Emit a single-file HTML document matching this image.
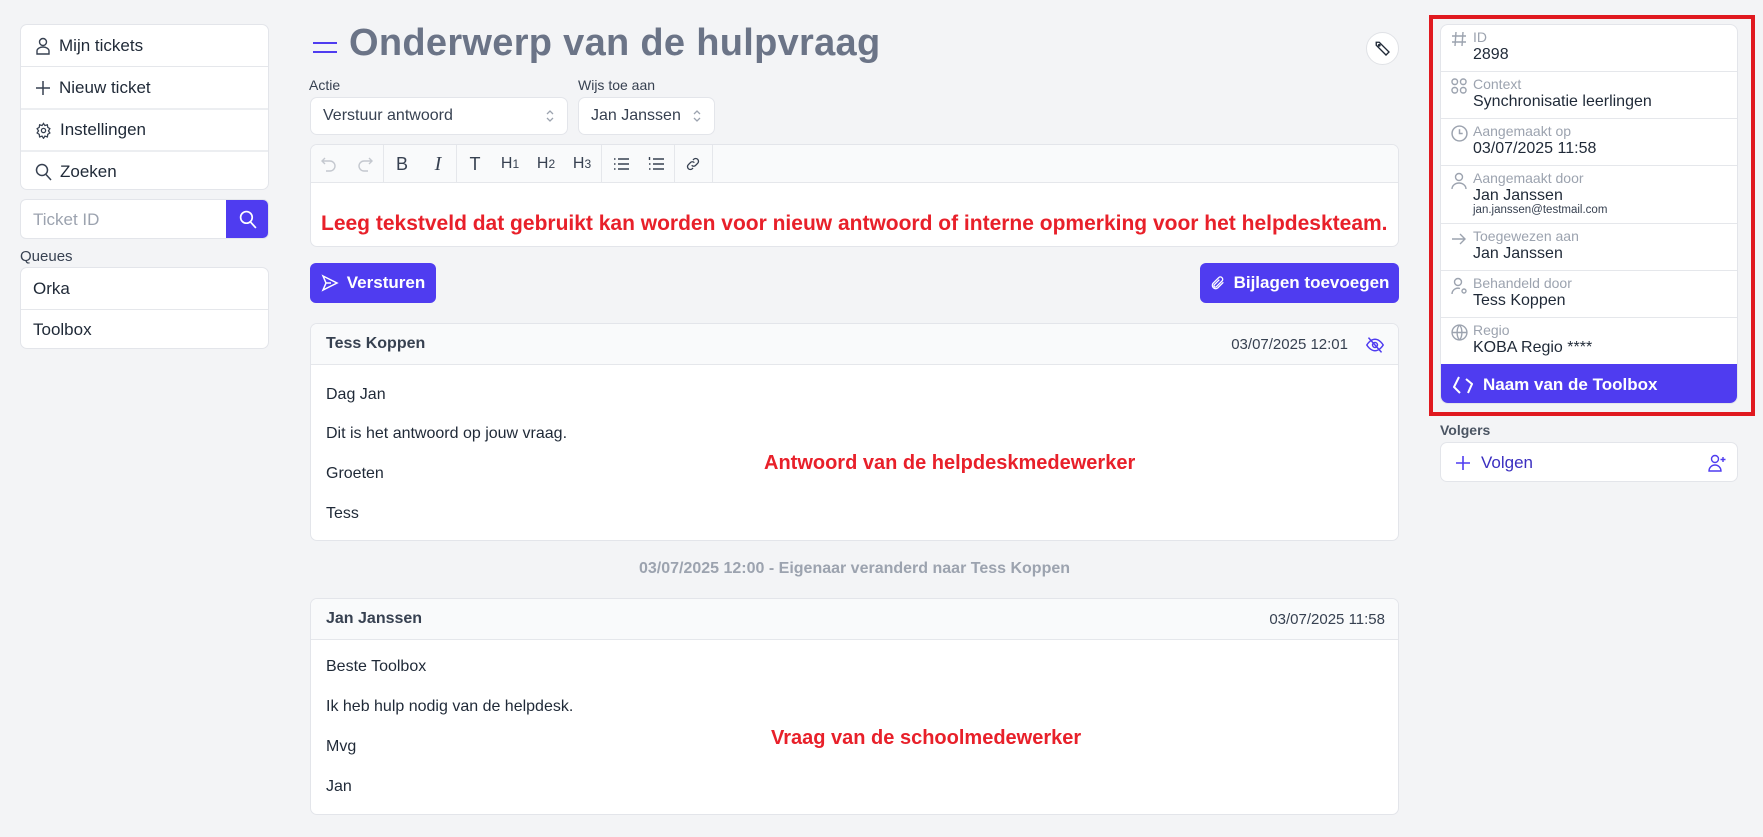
<!DOCTYPE html>
<html><head><meta charset="utf-8"><style>
*{box-sizing:border-box;margin:0;padding:0}
body{width:1763px;height:837px;background:#f3f4f6;font-family:"Liberation Sans",sans-serif;color:#1f2937;position:relative;overflow:hidden}
.a{position:absolute}
.box{position:absolute;background:#fff;border:1px solid #e3e5ea;border-radius:7px;overflow:hidden}
.row{position:absolute;left:0;right:0;border-top:1px solid #e5e7eb;display:flex;align-items:center;padding-left:14px;font-size:17px;color:#1f2937}
.row svg{margin-right:8px}
.lbl{font-size:14px;color:#374151}
.btn{position:absolute;background:#4f3cf0;color:#fff;border-radius:6px;font-weight:bold;font-size:17px;display:flex;align-items:center;justify-content:center;gap:8px}
.tb{position:absolute;top:0;height:38px;display:flex;align-items:center;justify-content:center;font-size:18px;color:#374151;width:36px}
.sep{position:absolute;top:0;width:1px;height:38px;background:#e5e7eb}
.red{position:absolute;color:#e8202a;font-weight:bold;white-space:nowrap}
.msgline{position:absolute;left:15px;font-size:16px;color:#1f2937}
.ir{position:absolute;left:0;right:0;border-top:1px solid #e5e7eb}
.ir .l{position:absolute;left:32px;top:4px;font-size:14px;color:#9ca3af}
.ir .v{position:absolute;left:32px;top:21px;font-size:16px;color:#1f2937}
.ir svg{position:absolute;left:10px;top:6px}
</style></head><body>

<!-- left sidebar -->
<div class="box" style="left:20px;top:24px;width:249px;height:166px">
 <div class="row" style="top:0;height:41px;border-top:none"><svg width="16" height="18" viewBox="0 0 16 18" fill="none" stroke="#374151" stroke-width="1.4"><circle cx="8" cy="5" r="3.5"/><path d="M2 17v-3a6 4 0 0 1 12 0v3z"/></svg>Mijn tickets</div>
 <div class="row" style="top:41px;height:42px"><svg width="16" height="16" viewBox="0 0 16 16" stroke="#374151" stroke-width="1.5"><path d="M8 1v14M1 8h14"/></svg>Nieuw ticket</div>
 <div class="row" style="top:83px;height:42px;border-top:2px solid #eceef1"><svg width="17" height="17" viewBox="0 0 24 24" fill="none" stroke="#374151" stroke-width="1.8"><circle cx="12" cy="12" r="3"/><path d="M12 2l2 3 3.5-1 .5 3.5 3 2-2 3 2 3-3 2-.5 3.5-3.5-1-2 3-2-3-3.5 1-.5-3.5-3-2 2-3-2-3 3-2 .5-3.5 3.5 1z"/></svg>Instellingen</div>
 <div class="row" style="top:125px;height:41px;border-top:2px solid #eceef1"><svg width="17" height="18" viewBox="0 0 17 18" fill="none" stroke="#374151" stroke-width="1.5"><circle cx="7" cy="7" r="5.5"/><path d="M11 11.5l5 5.5"/></svg>Zoeken</div>
</div>
<div class="box" style="left:20px;top:199px;width:249px;height:40px;border-radius:6px">
 <div class="a" style="left:12px;top:10px;font-size:17px;color:#9ca3af">Ticket ID</div>
 <div class="a" style="left:205px;top:-1px;width:44px;height:40px;background:#4f3cf0;display:flex;align-items:center;justify-content:center"><svg width="18" height="19" viewBox="0 0 17 18" fill="none" stroke="#fff" stroke-width="1.6"><circle cx="7" cy="7" r="5.5"/><path d="M11 11.5l5 5.5"/></svg></div>
</div>
<div class="a lbl" style="left:20px;top:248px;font-size:15px">Queues</div>
<div class="box" style="left:20px;top:267px;width:249px;height:82px">
 <div class="row" style="top:0;height:41px;border-top:none;padding-left:12px">Orka</div>
 <div class="row" style="top:41px;height:41px;padding-left:12px">Toolbox</div>
</div>

<!-- title -->
<svg class="a" style="left:313px;top:40px" width="24" height="14" viewBox="0 0 24 14" stroke="#4f3cf0" stroke-width="2"><path d="M0 3h24M0 12h24"/></svg>
<div class="a" style="left:349px;top:22px;font-size:38px;font-weight:bold;color:#6b7487;letter-spacing:.3px">Onderwerp van de hulpvraag</div>
<div class="a" style="left:1366px;top:32px;width:33px;height:33px;border-radius:50%;background:#fff;border:1px solid #e0e2e6;display:flex;align-items:center;justify-content:center"><svg width="18" height="18" viewBox="0 0 24 24" fill="none" stroke="#1f2937" stroke-width="1.8"><path d="M3 7V3h4l13 13-4 4L3 7z"/><circle cx="7" cy="7" r="1"/></svg></div>

<div class="a lbl" style="left:309px;top:77px">Actie</div>
<div class="a lbl" style="left:578px;top:77px">Wijs toe aan</div>
<div class="box" style="left:310px;top:97px;width:258px;height:38px">
 <div class="a" style="left:12px;top:9px;font-size:16px;color:#374151">Verstuur antwoord</div>
 <svg class="a" style="left:234px;top:11px" width="10" height="14" viewBox="0 0 10 14" fill="none" stroke="#9ca3af" stroke-width="1.3"><path d="M2 5l3-3 3 3M2 9l3 3 3-3"/></svg>
</div>
<div class="box" style="left:578px;top:97px;width:137px;height:38px">
 <div class="a" style="left:12px;top:9px;font-size:16px;color:#374151">Jan Janssen</div>
 <svg class="a" style="left:113px;top:11px" width="10" height="14" viewBox="0 0 10 14" fill="none" stroke="#9ca3af" stroke-width="1.3"><path d="M2 5l3-3 3 3M2 9l3 3 3-3"/></svg>
</div>

<!-- editor -->
<div class="box" style="left:310px;top:144px;width:1089px;height:103px">
 <div class="a" style="left:0;top:0;right:0;height:38px;background:#f9fafb;border-bottom:1px solid #e5e7eb"></div>
 <div class="tb" style="left:0"><svg width="16" height="16" viewBox="0 0 16 16" fill="none" stroke="#c4c8cf" stroke-width="1.4"><path d="M4 2L1 5l3 3M1 5h8a5 5 0 0 1 0 10H5"/></svg></div>
 <div class="tb" style="left:36px"><svg width="16" height="16" viewBox="0 0 16 16" fill="none" stroke="#c4c8cf" stroke-width="1.4"><path d="M12 2l3 3-3 3M15 5H7a5 5 0 0 0 0 10h4"/></svg></div>
 <div class="sep" style="left:72px"></div>
 <div class="tb" style="left:73px">B</div>
 <div class="tb" style="left:109px;font-style:italic;font-family:'Liberation Serif',serif;font-size:20px">I</div>
 <div class="sep" style="left:145px"></div>
 <div class="tb" style="left:146px">T</div>
 <div class="tb" style="left:181px;font-size:16px">H<span style="font-size:12px">1</span></div>
 <div class="tb" style="left:217px;font-size:16px">H<span style="font-size:12px">2</span></div>
 <div class="tb" style="left:253px;font-size:16px">H<span style="font-size:12px">3</span></div>
 <div class="sep" style="left:290px"></div>
 <div class="tb" style="left:292px"><svg width="16" height="14" viewBox="0 0 16 14" stroke="#374151" stroke-width="1.4"><path d="M5 2h11M5 7h11M5 12h11M1 2h1.5M1 7h1.5M1 12h1.5"/></svg></div>
 <div class="tb" style="left:327px"><svg width="16" height="14" viewBox="0 0 16 14" stroke="#374151" stroke-width="1.4"><path d="M5 2h11M5 7h11M5 12h11M1.5 0v3M1 7h1.5M1 12h1.5"/></svg></div>
 <div class="sep" style="left:363px"></div>
 <div class="tb" style="left:364px"><svg width="16" height="16" viewBox="0 0 24 24" fill="none" stroke="#374151" stroke-width="2"><path d="M10 14a4 4 0 0 0 6 0l3-3a4 4 0 0 0-6-6l-1 1M14 10a4 4 0 0 0-6 0l-3 3a4 4 0 0 0 6 6l1-1"/></svg></div>
 <div class="sep" style="left:401px"></div>
 <div class="red" style="left:10px;top:67px;font-size:21px">Leeg tekstveld dat gebruikt kan worden voor nieuw antwoord of interne opmerking voor het helpdeskteam.</div>
</div>

<div class="btn" style="left:310px;top:263px;width:126px;height:40px"><svg width="18" height="18" viewBox="0 0 18 18" fill="none" stroke="#fff" stroke-width="1.5"><path d="M2 2l14 7-14 7 3-7z M5 9h5"/></svg>Versturen</div>
<div class="btn" style="left:1200px;top:263px;width:199px;height:40px"><svg width="16" height="18" viewBox="0 0 24 24" fill="none" stroke="#fff" stroke-width="2"><path d="M20 11l-8.5 8.5a5 5 0 0 1-7-7L13 4a3.5 3.5 0 0 1 5 5l-8.5 8.5a2 2 0 0 1-3-3L14 7"/></svg>Bijlagen toevoegen</div>

<!-- message 1 -->
<div class="box" style="left:310px;top:323px;width:1089px;height:218px">
 <div class="a" style="left:0;top:0;right:0;height:41px;background:#f9fafb;border-bottom:1px solid #e5e7eb"></div>
 <div class="a" style="left:15px;top:11px;font-size:16px;font-weight:bold;color:#374151">Tess Koppen</div>
 <div class="a" style="right:50px;top:12px;font-size:15px;color:#374151">03/07/2025 12:01</div>
 <svg class="a" style="right:13px;top:12px" width="20" height="18" viewBox="0 0 24 22" fill="none" stroke="#4f3cf0" stroke-width="1.8"><path d="M2 11s4-7 10-7 10 7 10 7-4 7-10 7S2 11 2 11z"/><circle cx="12" cy="11" r="3"/><path d="M4 2l16 18"/></svg>
 <div class="msgline" style="top:62px">Dag Jan</div>
 <div class="msgline" style="top:101px">Dit is het antwoord op jouw vraag.</div>
 <div class="msgline" style="top:141px">Groeten</div>
 <div class="msgline" style="top:181px">Tess</div>
 <div class="red" style="left:453px;top:128px;font-size:20px">Antwoord van de helpdeskmedewerker</div>
</div>

<div class="a" style="left:310px;width:1089px;top:560px;text-align:center;font-size:16px;font-weight:bold;color:#9ca3af">03/07/2025 12:00 - Eigenaar veranderd naar Tess Koppen</div>

<!-- message 2 -->
<div class="box" style="left:310px;top:598px;width:1089px;height:217px">
 <div class="a" style="left:0;top:0;right:0;height:41px;background:#f9fafb;border-bottom:1px solid #e5e7eb"></div>
 <div class="a" style="left:15px;top:11px;font-size:16px;font-weight:bold;color:#374151">Jan Janssen</div>
 <div class="a" style="right:13px;top:12px;font-size:15px;color:#374151">03/07/2025 11:58</div>
 <div class="msgline" style="top:59px">Beste Toolbox</div>
 <div class="msgline" style="top:99px">Ik heb hulp nodig van de helpdesk.</div>
 <div class="msgline" style="top:139px">Mvg</div>
 <div class="msgline" style="top:179px">Jan</div>
 <div class="red" style="left:460px;top:128px;font-size:20px">Vraag van de schoolmedewerker</div>
</div>

<!-- right panel -->
<div class="a" style="left:1429px;top:15px;width:326px;height:401px;border:4px solid #e0191f"></div>
<div class="box" style="left:1440px;top:24px;width:298px;height:380px;border-radius:8px">
 <div class="ir" style="top:0;height:46px;border-top:none"><svg width="16" height="16" viewBox="0 0 16 16" stroke="#9ca3af" stroke-width="1.4"><path d="M5 1L4 15M12 1l-1 14M1 5h14M1 11h14"/></svg><div class="l">ID</div><div class="v">2898</div></div>
 <div class="ir" style="top:46px;height:47px"><svg width="16" height="16" viewBox="0 0 16 16" fill="none" stroke="#9ca3af" stroke-width="1.4"><rect x="1" y="1" width="5.5" height="5.5" rx="2.5"/><rect x="9.5" y="1" width="5.5" height="5.5" rx="2.5"/><rect x="1" y="9.5" width="5.5" height="5.5" rx="2.5"/><rect x="9.5" y="9.5" width="5.5" height="5.5" rx="2.5"/></svg><div class="l">Context</div><div class="v">Synchronisatie leerlingen</div></div>
 <div class="ir" style="top:93px;height:47px"><svg width="17" height="17" viewBox="0 0 16 16" fill="none" stroke="#9ca3af" stroke-width="1.4"><circle cx="8" cy="8" r="7"/><path d="M8 4v4h3"/></svg><div class="l">Aangemaakt op</div><div class="v">03/07/2025 11:58</div></div>
 <div class="ir" style="top:140px;height:58px"><svg width="16" height="18" viewBox="0 0 16 18" fill="none" stroke="#9ca3af" stroke-width="1.4"><circle cx="8" cy="5" r="3.5"/><path d="M1 17a7 6 0 0 1 14 0"/></svg><div class="l">Aangemaakt door</div><div class="v">Jan Janssen</div><div class="a" style="left:32px;top:38px;font-size:11.5px;color:#374151">jan.janssen@testmail.com</div></div>
 <div class="ir" style="top:198px;height:47px"><svg width="16" height="16" viewBox="0 0 16 16" fill="none" stroke="#9ca3af" stroke-width="1.4"><path d="M1 9h13M9 4l5 5-5 5"/></svg><div class="l">Toegewezen aan</div><div class="v">Jan Janssen</div></div>
 <div class="ir" style="top:245px;height:47px"><svg width="17" height="18" viewBox="0 0 17 18" fill="none" stroke="#9ca3af" stroke-width="1.4"><circle cx="7" cy="5" r="3.5"/><path d="M1 17a6 6 0 0 1 8-5.5"/><circle cx="13" cy="14" r="2"/></svg><div class="l">Behandeld door</div><div class="v">Tess Koppen</div></div>
 <div class="ir" style="top:292px;height:47px"><svg width="17" height="17" viewBox="0 0 16 16" fill="none" stroke="#9ca3af" stroke-width="1.3"><circle cx="8" cy="8" r="7"/><path d="M1 8h14M8 1c3 3 3 11 0 14M8 1c-3 3-3 11 0 14"/></svg><div class="l">Regio</div><div class="v">KOBA Regio ****</div></div>
 <div class="a" style="left:0;right:0;top:339px;height:41px;background:#4f3cf0;display:flex;align-items:center;padding-left:12px;color:#fff;font-weight:bold;font-size:17px"><svg width="20" height="20" viewBox="0 0 20 20" fill="none" stroke="#fff" stroke-width="2"><path d="M6 2L1 12l6 6M13 4l6 5-4 9"/></svg><span style="margin-left:10px">Naam van de Toolbox</span></div>
</div>
<div class="a" style="left:1440px;top:422px;font-size:14px;font-weight:bold;color:#4b5563">Volgers</div>
<div class="box" style="left:1440px;top:442px;width:298px;height:40px">
 <svg class="a" style="left:14px;top:12px" width="16" height="16" viewBox="0 0 16 16" stroke="#4f3cf0" stroke-width="1.6"><path d="M8 1v14M1 8h14"/></svg>
 <div class="a" style="left:40px;top:10px;font-size:17px;color:#3b2fc0">Volgen</div>
 <svg class="a" style="left:267px;top:11px" width="18" height="18" viewBox="0 0 18 18" fill="none" stroke="#4f3cf0" stroke-width="1.4"><circle cx="7" cy="5" r="3.5"/><path d="M1 17a6 6 0 0 1 12 0zM15 3v5M12.5 5.5h5"/></svg>
</div>
</body></html>
